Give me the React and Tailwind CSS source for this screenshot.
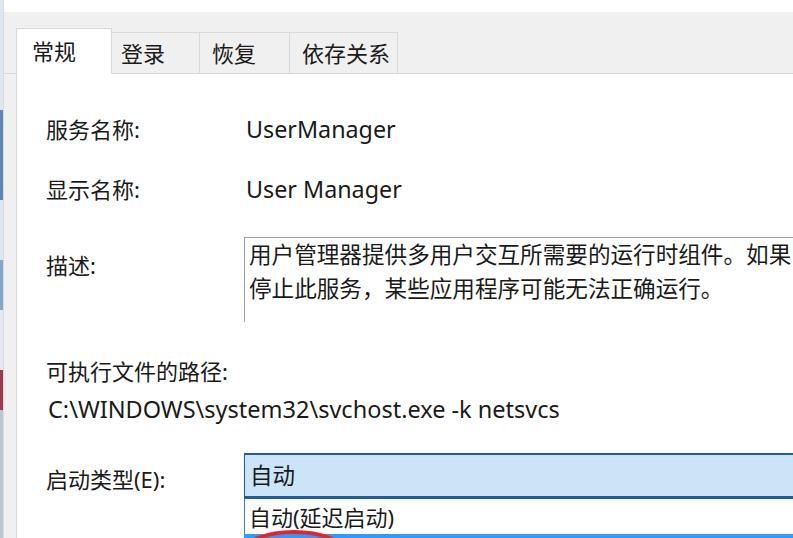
import React from 'react';

const font = {
  fontFamily: '"Noto Sans", "Noto Sans CJK SC", sans-serif',
};

const tabs = [
  { label: '登录', w: 'w-[89px]', pl: 'pl-[9px]' },
  { label: '恢复', w: 'w-[91px]', pl: 'pl-[12px]' },
  { label: '依存关系', w: 'w-[109px]', pl: 'pl-[12px]' },
];

export default function App() {
  return (
    <div style={font} className="w-[793px] h-[538px] flex bg-[#f0f0f0] overflow-hidden relative">
      {/* sliver of the window behind */}
      <div className="w-[3px] h-full flex flex-col bg-[#c9d6e6]">
        <div className="h-[110px] bg-[#dde6f1]" />
        <div className="h-[90px] bg-[#5f86b8]" />
        <div className="h-[60px] bg-[#dfe6ee]" />
        <div className="h-[50px] bg-[#8aa4c6]" />
        <div className="h-[60px] bg-[#e5eaf0]" />
        <div className="h-[40px] bg-[#9b3b4c]" />
        <div className="flex-1 bg-[#b9c7d8]" />
      </div>
      <div className="w-px h-full bg-[#dadada]" />

      <div className="flex-1 flex flex-col">
        <div className="h-[12px] bg-white" />

        {/* tab strip */}
        <div className="h-[63px] flex items-end pl-[12px] border-b border-[#d9d9d9]">
          <div className="h-[46px] w-[96px] -mb-px bg-white border border-b-0 border-[#d9d9d9] pl-[15px] pt-[7px] text-[22px] leading-[30px] text-[#1a1a1a] relative z-10">
            常规
          </div>
          {tabs.map((t) => (
            <div
              key={t.label}
              className={`h-[41px] ${t.w} ${t.pl} -ml-px bg-[#f0f0f0] border border-b-0 border-[#d9d9d9] pt-[5px] text-[22px] leading-[30px] text-[#1a1a1a]`}
            >
              {t.label}
            </div>
          ))}
        </div>

        {/* page */}
        <div className="flex-1 ml-[12px] bg-white border-l border-[#d9d9d9] pl-[29px] flex flex-col text-[22px] text-[#1a1a1a] relative">
          <div className="mt-[40px] flex leading-[30px]">
            <div className="w-[200px]">服务名称:</div>
            <div className="text-[23.3px]">UserManager</div>
          </div>
          <div className="mt-[30px] flex leading-[30px]">
            <div className="w-[200px]">显示名称:</div>
            <div className="text-[23.3px]">User Manager</div>
          </div>

          <div className="mt-[33px] flex">
            <div className="w-[198px] pt-[13px] leading-[30px]">描述:</div>
            <div className="flex-1 h-[85px] border-l border-t border-[#a0a0a0] pl-[4px] text-[22.6px] leading-[34px] whitespace-nowrap overflow-hidden">
              <div>用户管理器提供多用户交互所需要的运行时组件。如果</div>
              <div>停止此服务，某些应用程序可能无法正确运行。</div>
            </div>
          </div>

          <div className="mt-[34px] leading-[30px]">可执行文件的路径:</div>
          <div className="mt-[8px] leading-[30px] text-[23.5px] ml-[2px]">C:\WINDOWS\system32\svchost.exe -k netsvcs</div>

          <div className="mt-[29px] flex">
            <div className="w-[198px] pt-[11px] leading-[30px]">启动类型(E):</div>
            <div className="flex-1 flex flex-col">
              <div className="h-[46px] bg-[#cce4f7] border-t-2 border-b-[3px] border-l border-[#1c5ea6] pl-[5px] flex items-center leading-[30px] text-[22.5px]">
                自动
              </div>
              <div className="h-[35px] bg-white border-l border-[#3a7fd0] pl-[4px] flex items-center text-[22px] leading-[30px]">
                自动(延迟启动)
              </div>
              <div className="h-[4px] bg-[#3399ff]" />
            </div>
          </div>

          {/* red annotation ring */}
          <svg className="absolute left-[222px] top-[454px]" width="110" height="20" viewBox="0 0 110 20">
            <ellipse cx="55" cy="24" rx="50" ry="20" fill="none" stroke="#e3262b" strokeWidth="4" />
          </svg>
        </div>
      </div>
    </div>
  );
}
